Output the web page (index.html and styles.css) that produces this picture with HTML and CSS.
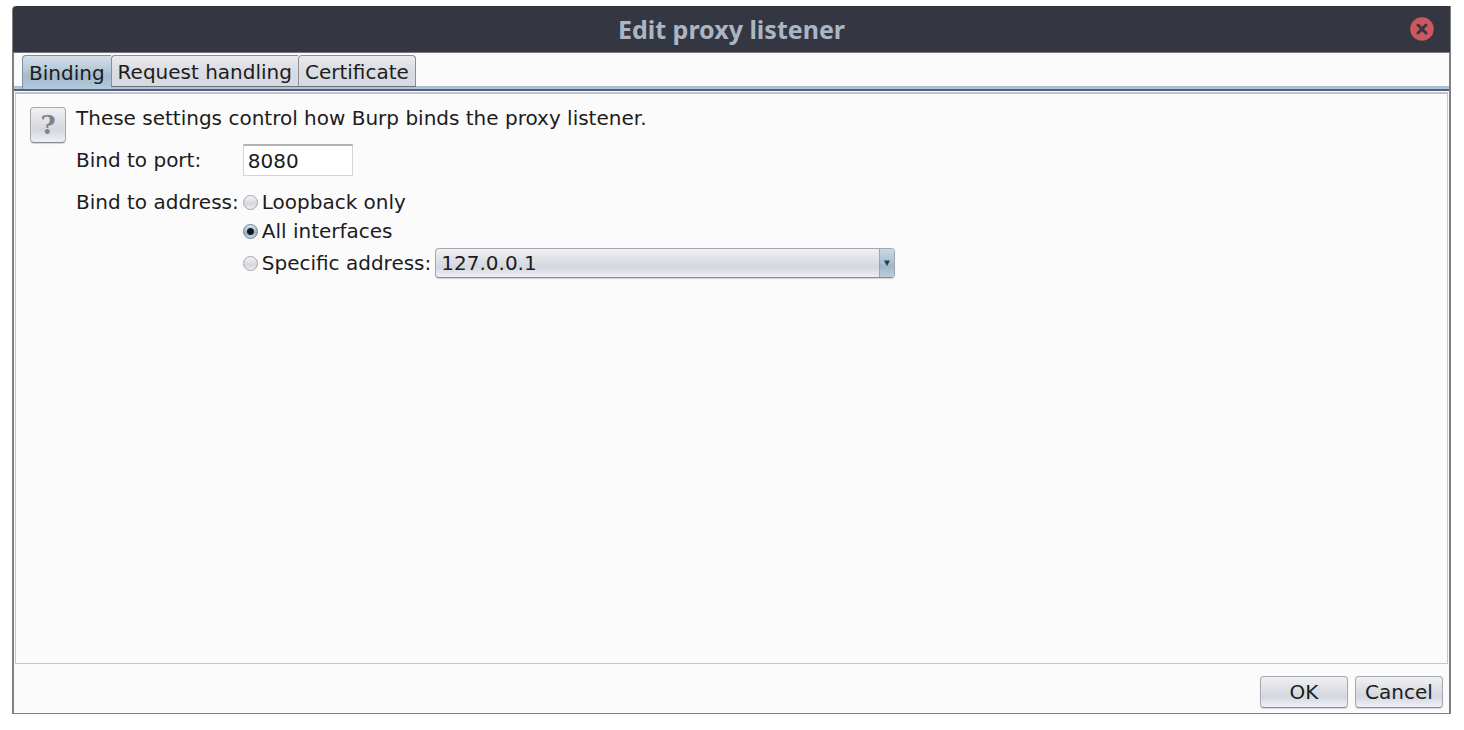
FILE: index.html
```html
<!DOCTYPE html>
<html lang="en">
<head>
    <meta charset="UTF-8">
    <meta name="viewport" content="width=device-width, initial-scale=1.0">
    <title>Edit proxy listener</title>
    <link rel="stylesheet" href="styles.css">
</head>
<body>

<div class="window">
    <!-- Title Bar -->
    <header class="title-bar">
        <h1>Edit proxy listener</h1>
        <button type="button" class="close-button" aria-label="Close">
            <svg width="24" height="24" viewBox="0 0 24 24">
                <circle cx="12" cy="12" r="11.8" fill="#cc575d"/>
                <path d="M8 8L16 16M16 8L8 16" stroke="#343742" stroke-width="3" stroke-linecap="round"/>
            </svg>
        </button>
    </header>

    <!-- Tabs -->
    <nav class="tabs" role="tablist">
        <button type="button" class="tab active" role="tab" aria-selected="true">Binding</button>
        <button type="button" class="tab" role="tab" aria-selected="false">Request handling</button>
        <button type="button" class="tab" role="tab" aria-selected="false">Certificate</button>
    </nav>

    <!-- Binding Panel -->
    <main class="panel" role="tabpanel">
        <button type="button" class="help-button" aria-label="Help">?</button>
        <form class="settings" id="binding-form">
            <p class="intro">These settings control how Burp binds the proxy listener.</p>

            <label class="field-label" for="port">Bind to port:</label>
            <input class="port" type="text" id="port" value="8080">

            <span class="field-label" id="address-label">Bind to address:</span>
            <div class="options" role="radiogroup" aria-labelledby="address-label">
                <div class="option">
                    <input type="radio" name="address" id="loopback">
                    <label for="loopback">Loopback only</label>
                </div>
                <div class="option">
                    <input type="radio" name="address" id="all" checked>
                    <label for="all">All interfaces</label>
                </div>
                <div class="option specific">
                    <input type="radio" name="address" id="specific">
                    <label for="specific">Specific address:</label>
                    <div class="combo">
                        <select aria-label="Specific address">
                            <option>127.0.0.1</option>
                        </select>
                        <span class="combo-arrow">
                            <svg width="6" height="6" viewBox="0 0 6 6"><path d="M0 0.5H6L3 6Z" fill="#2b3a48"/></svg>
                        </span>
                    </div>
                </div>
            </div>
        </form>
    </main>

    <!-- Dialog Buttons -->
    <footer class="actions">
        <button type="submit" form="binding-form" class="action">OK</button>
        <button type="button" class="action">Cancel</button>
    </footer>
</div>

</body>
</html>
```
FILE: styles.css
```css
/* Global Styles */
* {
    box-sizing: border-box;
}
body {
    font-family: "DejaVu Sans", sans-serif;
    font-size: 20px;
    line-height: 24px;
    color: #1c1c1c;
    background-color: #fff;
    margin: 0;
    padding: 6px 13px 16px 12px;
    min-height: 100vh;
    display: flex;
}
button,
input,
select {
    font: inherit;
    color: inherit;
    margin: 0;
}

/* Window */
.window {
    flex: 1;
    display: flex;
    flex-direction: column;
    background-color: #fbfbfb;
    border: 2px solid #7f807f;
    border-top: none;
    border-bottom-width: 1px;
    border-top-left-radius: 4px;
}

/* Title Bar */
.title-bar {
    display: grid;
    grid-template-columns: 1fr auto 1fr;
    align-items: center;
    height: 47px;
    padding: 0 16px;
    margin: 0 -1px;
    background-color: #343742;
    border-bottom: 1px solid #77757f;
    border-top-left-radius: 4px;
}
.title-bar h1 {
    grid-column: 2;
    margin: 0;
    font-family: "Noto Sans", sans-serif;
    font-size: 25px;
    font-weight: bold;
    color: #acb5c3;
}
.close-button {
    justify-self: end;
    display: flex;
    padding: 0;
    border: none;
    background: none;
}

/* Tabs */
.tabs {
    display: flex;
    padding: 2px 8px 0;
    border-bottom: 2px solid #536078;
    background: linear-gradient(#a3b8cb, #b3cade) bottom / 100% 3px no-repeat;
}
.tab {
    height: 32px;
    padding: 2px 6px 0;
    border: 1px solid #8b8e98;
    border-right: none;
    border-bottom-color: #69707f;
    border-radius: 4px 0 0 0;
    background: linear-gradient(#eaeaee, #dadce2 50%, #d6d9e0);
    margin-bottom: 2px;
}
.tab:last-child {
    border-right: 1px solid #8b8e98;
    border-top-right-radius: 4px;
}
.tab.active {
    height: 34px;
    margin-bottom: 0;
    padding-bottom: 1px;
    border-color: #7b8ea3;
    border-bottom: none;
    background: linear-gradient(#d5dfe8, #b4c7d7 45%, #a3b8cb 60%, #b3cade);
}

/* Binding Panel */
.panel {
    flex: 1;
    display: flex;
    align-items: flex-start;
    gap: 10px;
    margin: 1px 1px 0;
    padding: 12px 14px;
    border: 1px solid #c4c7ce;
    border-top: 2px solid #c0c3cc;
}
.help-button,
.action,
.combo select {
    border: 1px solid #a6a9b0;
    border-bottom-color: #888c96;
    border-radius: 4px;
    background: linear-gradient(#f0f1f3, #dcdee3 45%, #d4d7df 65%, #eef0f5);
    box-shadow: 0 1px 1px #d2d4d8;
}
.help-button {
    width: 36px;
    height: 36px;
    margin-top: 1px;
    padding: 0;
    font-family: "DejaVu Serif", serif;
    font-size: 26px;
    font-weight: bold;
    color: #828282;
}
.settings {
    flex: 1;
    display: grid;
    grid-template-columns: auto 1fr;
    column-gap: 4px;
    align-items: start;
}
.intro {
    grid-column: 1 / -1;
    margin: 0 0 14px;
}
.field-label {
    padding-top: 4px;
}
.port {
    width: 110px;
    height: 32px;
    padding: 0 4px;
    border: 1px solid #d4d5d8;
    border-top: 2px solid #b2b3b7;
    background-color: #fff;
    margin-bottom: 10px;
}
.options {
    padding-top: 4px;
}
.option {
    display: flex;
    align-items: center;
    gap: 4px;
    margin-bottom: 5px;
}
.option input {
    appearance: none;
    width: 15px;
    height: 15px;
    border: 1px solid #a3a5ab;
    border-radius: 50%;
    background: linear-gradient(#f2f3f5, #d5d7de 60%, #eceef2);
}
.option input:checked {
    border-color: #6c7f94;
    background: radial-gradient(circle, #15191d 0 3px, transparent 4px), linear-gradient(#dce6ee, #93aec6 60%, #c3d6e6);
}

/* Address Drop-down */
.combo {
    position: relative;
    flex: 0 1 460px;
}
.combo select {
    display: block;
    appearance: none;
    width: 100%;
    height: 30px;
    padding: 0 24px 0 5px;
}
.combo-arrow {
    position: absolute;
    top: 1px;
    right: 1px;
    bottom: 1px;
    width: 15px;
    display: flex;
    align-items: center;
    justify-content: center;
    border-left: 1px solid #94a8bb;
    border-radius: 0 3px 3px 0;
    background: linear-gradient(#cbd8e3, #a9bfd1 50%, #9fb6ca 60%, #b8cfe1);
    pointer-events: none;
}

/* Dialog Buttons */
.actions {
    display: flex;
    justify-content: flex-end;
    gap: 7px;
    padding: 12px 6px 5px;
}
.action {
    width: 88px;
    height: 32px;
    padding: 0;
}

/* Responsive Design */
@media (max-width: 768px) {
    .settings {
        grid-template-columns: 1fr;
    }
    .option.specific {
        flex-wrap: wrap;
    }
}
```
